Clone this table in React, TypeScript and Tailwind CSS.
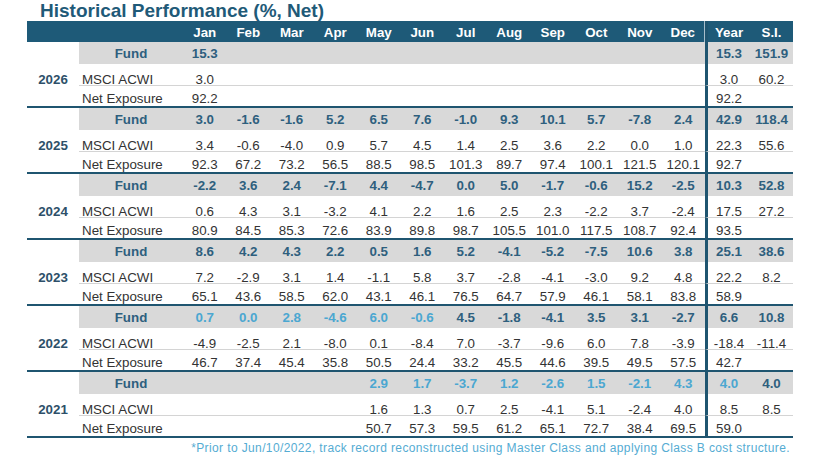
import React from "react";

const COLS = "grid grid-cols-[52px_104px_repeat(12,43.5px)_45px_43px]";
const MONTHS = ["Jan", "Feb", "Mar", "Apr", "May", "Jun", "Jul", "Aug", "Sep", "Oct", "Nov", "Dec"];

type Block = {
  year: string;
  fund: string[];
  msci: string[];
  net: string[];
  blue?: boolean[];
};

const e = "";
const blocks: Block[] = [
  {
    year: "2026",
    fund: ["15.3", e, e, e, e, e, e, e, e, e, e, e, "15.3", "151.9"],
    msci: ["3.0", e, e, e, e, e, e, e, e, e, e, e, "3.0", "60.2"],
    net: ["92.2", e, e, e, e, e, e, e, e, e, e, e, "92.2", e],
  },
  {
    year: "2025",
    fund: ["3.0", "-1.6", "-1.6", "5.2", "6.5", "7.6", "-1.0", "9.3", "10.1", "5.7", "-7.8", "2.4", "42.9", "118.4"],
    msci: ["3.4", "-0.6", "-4.0", "0.9", "5.7", "4.5", "1.4", "2.5", "3.6", "2.2", "0.0", "1.0", "22.3", "55.6"],
    net: ["92.3", "67.2", "73.2", "56.5", "88.5", "98.5", "101.3", "89.7", "97.4", "100.1", "121.5", "120.1", "92.7", e],
  },
  {
    year: "2024",
    fund: ["-2.2", "3.6", "2.4", "-7.1", "4.4", "-4.7", "0.0", "5.0", "-1.7", "-0.6", "15.2", "-2.5", "10.3", "52.8"],
    msci: ["0.6", "4.3", "3.1", "-3.2", "4.1", "2.2", "1.6", "2.5", "2.3", "-2.2", "3.7", "-2.4", "17.5", "27.2"],
    net: ["80.9", "84.5", "85.3", "72.6", "83.9", "89.8", "98.7", "105.5", "101.0", "117.5", "108.7", "92.4", "93.5", e],
  },
  {
    year: "2023",
    fund: ["8.6", "4.2", "4.3", "2.2", "0.5", "1.6", "5.2", "-4.1", "-5.2", "-7.5", "10.6", "3.8", "25.1", "38.6"],
    msci: ["7.2", "-2.9", "3.1", "1.4", "-1.1", "5.8", "3.7", "-2.8", "-4.1", "-3.0", "9.2", "4.8", "22.2", "8.2"],
    net: ["65.1", "43.6", "58.5", "62.0", "43.1", "46.1", "76.5", "64.7", "57.9", "46.1", "58.1", "83.8", "58.9", e],
  },
  {
    year: "2022",
    fund: ["0.7", "0.0", "2.8", "-4.6", "6.0", "-0.6", "4.5", "-1.8", "-4.1", "3.5", "3.1", "-2.7", "6.6", "10.8"],
    msci: ["-4.9", "-2.5", "2.1", "-8.0", "0.1", "-8.4", "7.0", "-3.7", "-9.6", "6.0", "7.8", "-3.9", "-18.4", "-11.4"],
    net: ["46.7", "37.4", "45.4", "35.8", "50.5", "24.4", "33.2", "45.5", "44.6", "39.5", "49.5", "57.5", "42.7", e],
    blue: [true, true, true, true, true, true, false, false, false, false, false, false, false, false],
  },
  {
    year: "2021",
    fund: [e, e, e, e, "2.9", "1.7", "-3.7", "1.2", "-2.6", "1.5", "-2.1", "4.3", "4.0", "4.0"],
    msci: [e, e, e, e, "1.6", "1.3", "0.7", "2.5", "-4.1", "5.1", "-2.4", "4.0", "8.5", "8.5"],
    net: [e, e, e, e, "50.7", "57.3", "59.5", "61.2", "65.1", "72.7", "38.4", "69.5", "59.0", e],
    blue: [false, false, false, false, true, true, true, true, true, true, true, true, true, false],
  },
];

function FundRow({ b }: { b: Block }) {
  return (
    <div className={`${COLS} h-[22px]`}>
      <div />
      <div className="bg-[#d9d9d9] flex items-center justify-center pt-[1px] font-bold text-[#2e5f7e]">Fund</div>
      {b.fund.map((v, i) => (
        <div
          key={i}
          className={`bg-[#d9d9d9] flex items-center justify-center pt-[1px] font-bold ${
            b.blue && b.blue[i] ? "text-[#4ba7d1]" : "text-[#2e5f7e]"
          } ${i === 12 ? "border-l-[3px] border-[#1f5570]" : ""}`}
        >
          {v}
        </div>
      ))}
    </div>
  );
}

function MsciRow({ b }: { b: Block }) {
  return (
    <div className={`${COLS} h-[21px] text-[#333333]`}>
      <div className="flex items-center justify-center pt-[8px] font-bold text-[#2d5069]">{b.year}</div>
      <div className="flex items-center pl-[3px] pt-[8px]">MSCI ACWI</div>
      {b.msci.map((v, i) => (
        <div
          key={i}
          className={`flex items-center justify-center pt-[8px] ${i === 12 ? "border-l-[3px] border-[#1f5570]" : ""}`}
        >
          {v}
        </div>
      ))}
    </div>
  );
}

function NetRow({ b }: { b: Block }) {
  return (
    <div className={`${COLS} h-[21px] text-[#333333]`}>
      <div />
      <div className="flex items-center pl-[3px] pt-[4px] border-t border-[#d4d4d4]">Net Exposure</div>
      {b.net.map((v, i) => (
        <div
          key={i}
          className={`flex items-center justify-center pt-[4px] border-t border-t-[#d4d4d4] ${
            i === 12 ? "border-l-[3px] border-l-[#1f5570]" : ""
          }`}
        >
          {v}
        </div>
      ))}
    </div>
  );
}

export default function App() {
  return (
    <div className="w-[820px] h-[461px] overflow-hidden bg-white font-['Liberation_Sans',Arial,sans-serif] text-[13.33px] leading-[15px]">
      <div className="h-[21px] pl-[40px] text-[19px] leading-[21px] font-bold text-[#1f5a78]">
        Historical Performance (%, Net)
      </div>
      <div className="ml-[27px] w-[766px]">
        <div className={`${COLS} h-[21px] bg-[#1e5a78] text-white font-bold`}>
          <div />
          <div />
          {MONTHS.map((m, i) => (
            <div
              key={m}
              className={`flex items-center justify-center pt-[1px] ${i === 11 ? "border-r border-[#a8bfcc]" : ""}`}
            >
              {m}
            </div>
          ))}
          <div className="flex items-center justify-center pt-[1px] border-l-[3px] border-[#1f5570]">Year</div>
          <div className="flex items-center justify-center pt-[1px]">S.I.</div>
        </div>
        {blocks.map((b, idx) => (
          <div key={b.year}>
            {idx > 0 && <div className="h-[2px] bg-[#1f5570]" />}
            <FundRow b={b} />
            <MsciRow b={b} />
            <NetRow b={b} />
          </div>
        ))}
        <div className="h-[2px] bg-[#1f5570]" />
      </div>
      <div className="w-[790px] text-right pt-[3px] text-[12px] leading-[14px] tracking-[0.38px] text-[#55acd3]">
        *Prior to Jun/10/2022, track record reconstructed using Master Class and applying Class B cost structure.
      </div>
    </div>
  );
}
